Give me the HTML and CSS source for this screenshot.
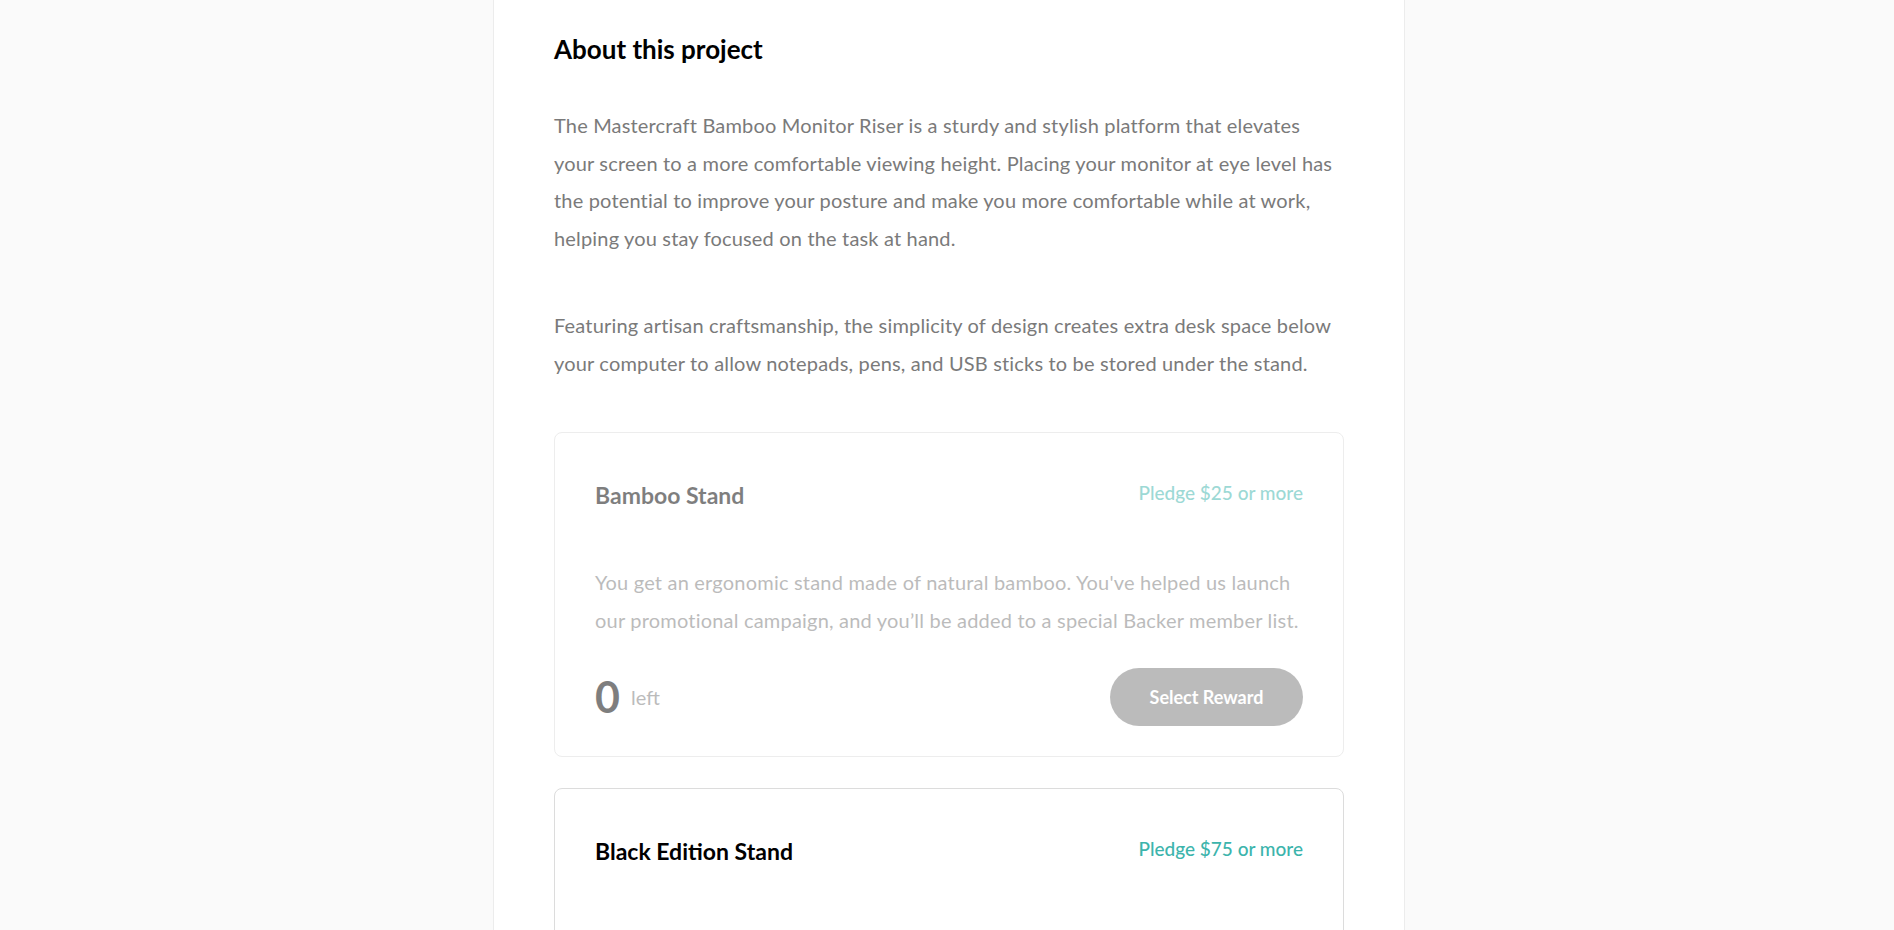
FILE: index.html
```html
<!DOCTYPE html>
<html lang="en">
<head>
<meta charset="utf-8">
<title>About this project</title>
<link rel="stylesheet" href="styles.css">
</head>
<body>
<main class="page">
  <section class="about">
    <h2 class="about-title">About this project</h2>
    <p class="about-text">The Mastercraft Bamboo Monitor Riser is a sturdy and stylish platform that elevates your screen to a more comfortable viewing height. Placing your monitor at eye level has the potential to improve your posture and make you more comfortable while at work, helping you stay focused on the task at hand.</p>
    <p class="about-text">Featuring artisan craftsmanship, the simplicity of design creates extra desk space below your computer to allow notepads, pens, and USB sticks to be stored under the stand.</p>

    <article class="reward reward--out">
      <div class="reward-head">
        <h3 class="reward-name">Bamboo Stand</h3>
        <span class="reward-pledge">Pledge $25 or more</span>
      </div>
      <p class="reward-desc">You get an ergonomic stand made of natural bamboo. You've helped us launch our promotional campaign, and you’ll be added to a special Backer member list.</p>
      <div class="reward-foot">
        <div class="reward-left"><span class="reward-count">0</span><span class="reward-unit">left</span></div>
        <button class="reward-btn" type="button">Select Reward</button>
      </div>
    </article>

    <article class="reward">
      <div class="reward-head">
        <h3 class="reward-name">Black Edition Stand</h3>
        <span class="reward-pledge">Pledge $75 or more</span>
      </div>
      <p class="reward-desc">You get a Black Special Edition computer stand and a personal thank you. You’ll be added to our Backer member list. Shipping is included.</p>
      <div class="reward-foot">
        <div class="reward-left"><span class="reward-count">64</span><span class="reward-unit">left</span></div>
        <button class="reward-btn" type="button">Select Reward</button>
      </div>
    </article>
  </section>
</main>
</body>
</html>
```

FILE: styles.css
```css
* { box-sizing: border-box; }

html, body {
  margin: 0;
  padding: 0;
}

body {
  background: #fafafa;
  font-family: Lato, "Liberation Sans", sans-serif;
  color: #000;
  height: 930px;
  overflow: hidden;
}

.page {
  display: flex;
  justify-content: center;
  padding-left: 4px;
}

.about {
  width: 912px;
  background: #fff;
  border: 1px solid #ececec;
  border-top: 0;
  border-radius: 0 0 8px 8px;
  padding: 35px 60px 60px;
}

.about-title {
  margin: 0 0 43px;
  font-size: 26px;
  line-height: 29px;
  font-weight: 700;
}

.about-text {
  margin: 0 0 50px;
  font-size: 20px;
  letter-spacing: 0.17px;
  line-height: 37.5px;
  color: #7a7a7a;
}

.reward {
  border: 1px solid #dcdcdc;
  border-radius: 8px;
  padding: 48px 40px 30px;
  margin-bottom: 31px;
}

.reward--out {
  opacity: 0.5;
}

.reward-head {
  display: flex;
  justify-content: space-between;
  align-items: center;
  height: 28px;
}

.reward-name {
  margin: 0;
  font-size: 23px;
  line-height: 28px;
  font-weight: 700;
}

.reward-pledge {
  font-size: 19px;
  line-height: 24px;
  font-weight: 500;
  color: #3cb4ac;
  margin-top: -5px;
}

.reward-desc {
  margin: 55px 0 29px;
  font-size: 20px;
  letter-spacing: 0.2px;
  line-height: 37.5px;
  color: #7a7a7a;
}

.reward-foot {
  display: flex;
  justify-content: space-between;
  align-items: center;
}

.reward-left {
  display: flex;
  align-items: center;
  gap: 11px;
}

.reward-count {
  font-size: 43px;
  line-height: 44px;
  font-weight: 700;
}

.reward-unit {
  font-size: 20px;
  line-height: 24px;
  color: #7a7a7a;
}

.reward-btn {
  width: 193px;
  height: 58px;
  border: 0;
  border-radius: 29px;
  background: #7a7a7a;
  color: #fff;
  font-family: inherit;
  font-size: 18px;
  font-weight: 700;
}
```
